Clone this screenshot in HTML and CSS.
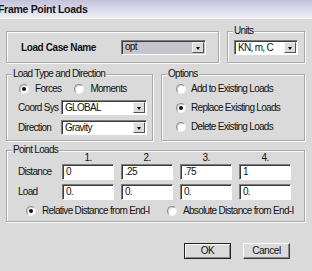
FILE: index.html
```html
<!DOCTYPE html>
<html>
<head>
  <meta charset="UTF-8">
  <title>Frame Point Loads</title>
  <link rel="stylesheet" href="styles.css">
</head>
<body>
  <div class="titlebar">Frame Point Loads</div>
  <div class="dialog">
    <div class="row row-top">
      <div class="box case-box">
        <span class="case-label">Load Case Name</span>
        <div class="combo combo-case"><span class="combo-text">opt</span><span class="combo-btn"></span></div>
      </div>
      <div class="group units-group">
        <span class="legend">Units</span>
        <div class="combo combo-units"><span class="combo-text">KN, m, C</span><span class="combo-btn"></span></div>
      </div>
    </div>

    <div class="row row-mid">
      <div class="group type-group">
        <span class="legend">Load Type and Direction</span>
        <div class="radio-row">
          <span class="radio checked"></span><span class="opt-label forces">Forces</span>
          <span class="radio"></span><span class="opt-label">Moments</span>
        </div>
        <div class="field-row">
          <span class="field-label">Coord Sys</span>
          <div class="combo combo-wide"><span class="combo-text">GLOBAL</span><span class="combo-btn"></span></div>
        </div>
        <div class="field-row">
          <span class="field-label">Direction</span>
          <div class="combo combo-wide"><span class="combo-text">Gravity</span><span class="combo-btn"></span></div>
        </div>
      </div>
      <div class="group options-group">
        <span class="legend">Options</span>
        <div class="option"><span class="radio"></span><span class="opt-label">Add to Existing Loads</span></div>
        <div class="option"><span class="radio checked"></span><span class="opt-label">Replace Existing Loads</span></div>
        <div class="option"><span class="radio"></span><span class="opt-label">Delete Existing Loads</span></div>
      </div>
    </div>

    <div class="group loads-group">
      <span class="legend">Point Loads</span>
      <div class="loads-grid">
        <span></span>
        <span class="col-head">1.</span>
        <span class="col-head">2.</span>
        <span class="col-head">3.</span>
        <span class="col-head">4.</span>

        <span class="field-label">Distance</span>
        <div class="edit">0</div>
        <div class="edit">.25</div>
        <div class="edit">.75</div>
        <div class="edit">1</div>

        <span class="field-label">Load</span>
        <div class="edit">0.</div>
        <div class="edit">0.</div>
        <div class="edit">0.</div>
        <div class="edit">0.</div>
      </div>
      <div class="dist-row">
        <div class="dist-opt first"><span class="radio checked"></span><span class="opt-label">Relative Distance from End-I</span></div>
        <div class="dist-opt"><span class="radio"></span><span class="opt-label">Absolute Distance from End-I</span></div>
      </div>
    </div>

    <div class="buttons">
      <div class="btn default">OK</div>
      <div class="btn">Cancel</div>
    </div>
  </div>
</body>
</html>
```

FILE: styles.css
```css
body { margin: 0; width: 312px; height: 271px; overflow: hidden; background: #dadada; color: #111; font-family: "Liberation Sans", Arial, sans-serif; font-size: 10px; letter-spacing: -0.7px; }

.titlebar { height: 18px; line-height: 18px; text-indent: -2px; font-weight: bold; font-size: 10.5px; letter-spacing: -0.3px; color: #141414; background: linear-gradient(#c3c0da, #dedded 60%, #efeff5); border-bottom: 1px solid #f6f6f8; }

.dialog { padding: 12px 7px 0 6px; }

.row { display: flex; gap: 8px; }
.row-top { height: 32px; margin-bottom: 11px; }
.row-mid { height: 67px; margin-bottom: 9px; }

.box, .group { position: relative; box-sizing: border-box; border: 1px solid #a9a9a9; box-shadow: 1px 1px 0 #fbfbfb, inset 1px 1px 0 #fbfbfb; }
.legend { position: absolute; top: -7px; left: 5px; padding: 0 1px; line-height: 12px; background: #dadada; }

.case-box { width: 213px; display: flex; align-items: center; padding: 0 12px 0 14px; }
.case-label { font-weight: bold; letter-spacing: -0.4px; }
.units-group { width: 78px; padding: 8px 0 0 6px; }

.combo { position: relative; box-sizing: border-box; height: 15px; background: #fff; border: 1px solid; border-color: #7c7c7c #fff #fff #7c7c7c; box-shadow: inset 1px 1px 0 #3c3c3c; display: flex; align-items: center; }
.combo-text { padding-left: 3px; line-height: 12px; }
.combo-btn { position: absolute; right: 1px; top: 1px; width: 12px; height: 11px; box-sizing: border-box; background: #dcdcdc; border: 1px solid; border-color: #f4f4f4 #555 #555 #f4f4f4; }
.combo-btn::after { content: ""; position: absolute; left: 3px; top: 4px; border-style: solid; border-width: 3px 2.5px 0 2.5px; border-color: #000 transparent transparent transparent; }
.combo-case { margin-left: auto; width: 85px; background: #c4c4cb; }
.combo-units { width: 64px; }
.combo-wide { width: 86px; }

.radio { position: relative; display: inline-block; flex: none; width: 10px; height: 10px; box-sizing: border-box; border-radius: 50%; background: #fff; border: 1px solid; border-color: #8c8c8c #f2f2f2 #f2f2f2 #8c8c8c; box-shadow: inset 1px 1px 0 #cfcfcf; }
.radio.checked::after { content: ""; position: absolute; left: 2px; top: 2px; width: 4px; height: 4px; border-radius: 50%; background: #111; }
.opt-label { margin-left: 6px; line-height: 12px; }

.type-group { width: 147px; padding: 8px 0 0 11px; }
.radio-row { display: flex; align-items: center; height: 12px; padding-left: 1px; }
.forces { margin-right: 13px; }
.field-row { display: flex; align-items: center; margin-top: 5px; }
.field-label { width: 43px; line-height: 15px; }

.options-group { width: 144px; padding: 8px 0 0 14px; }
.option { display: flex; align-items: center; height: 12px; margin-bottom: 7px; }
.option .opt-label { margin-left: 5px; }

.loads-group { height: 72px; padding: 1px 0 0 11px; }
.loads-grid { display: grid; grid-template-columns: 37px repeat(4, 52px); grid-template-rows: 12px 16px 16px; column-gap: 7px; }
.loads-grid .field-label { width: auto; line-height: 16px; }
.loads-grid > :nth-child(n+11) { margin-top: 4px; }
.col-head { text-align: center; line-height: 12px; }
.edit { box-sizing: border-box; height: 16px; background: #fff; border: 1px solid; border-color: #7c7c7c #fff #fff #7c7c7c; box-shadow: inset 1px 1px 0 #3c3c3c; padding-left: 3px; line-height: 14px; }
.dist-row { display: flex; align-items: center; margin-top: 9px; padding-left: 8px; }
.dist-opt { display: flex; align-items: center; }
.dist-opt.first { width: 141px; }

.buttons { display: flex; justify-content: flex-end; gap: 12px; margin-top: 21px; padding-right: 15px; }
.btn { box-sizing: border-box; width: 47px; height: 16px; line-height: 13px; text-align: center; letter-spacing: -0.4px; border: 1px solid; border-color: #fbfbfb #3a3a3a #3a3a3a #fbfbfb; box-shadow: inset -1px -1px 0 #8a8a8a; }
.btn.default { border-color: #222; box-shadow: inset 1px 1px 0 #fbfbfb, inset -1px -1px 0 #8a8a8a; }
```
